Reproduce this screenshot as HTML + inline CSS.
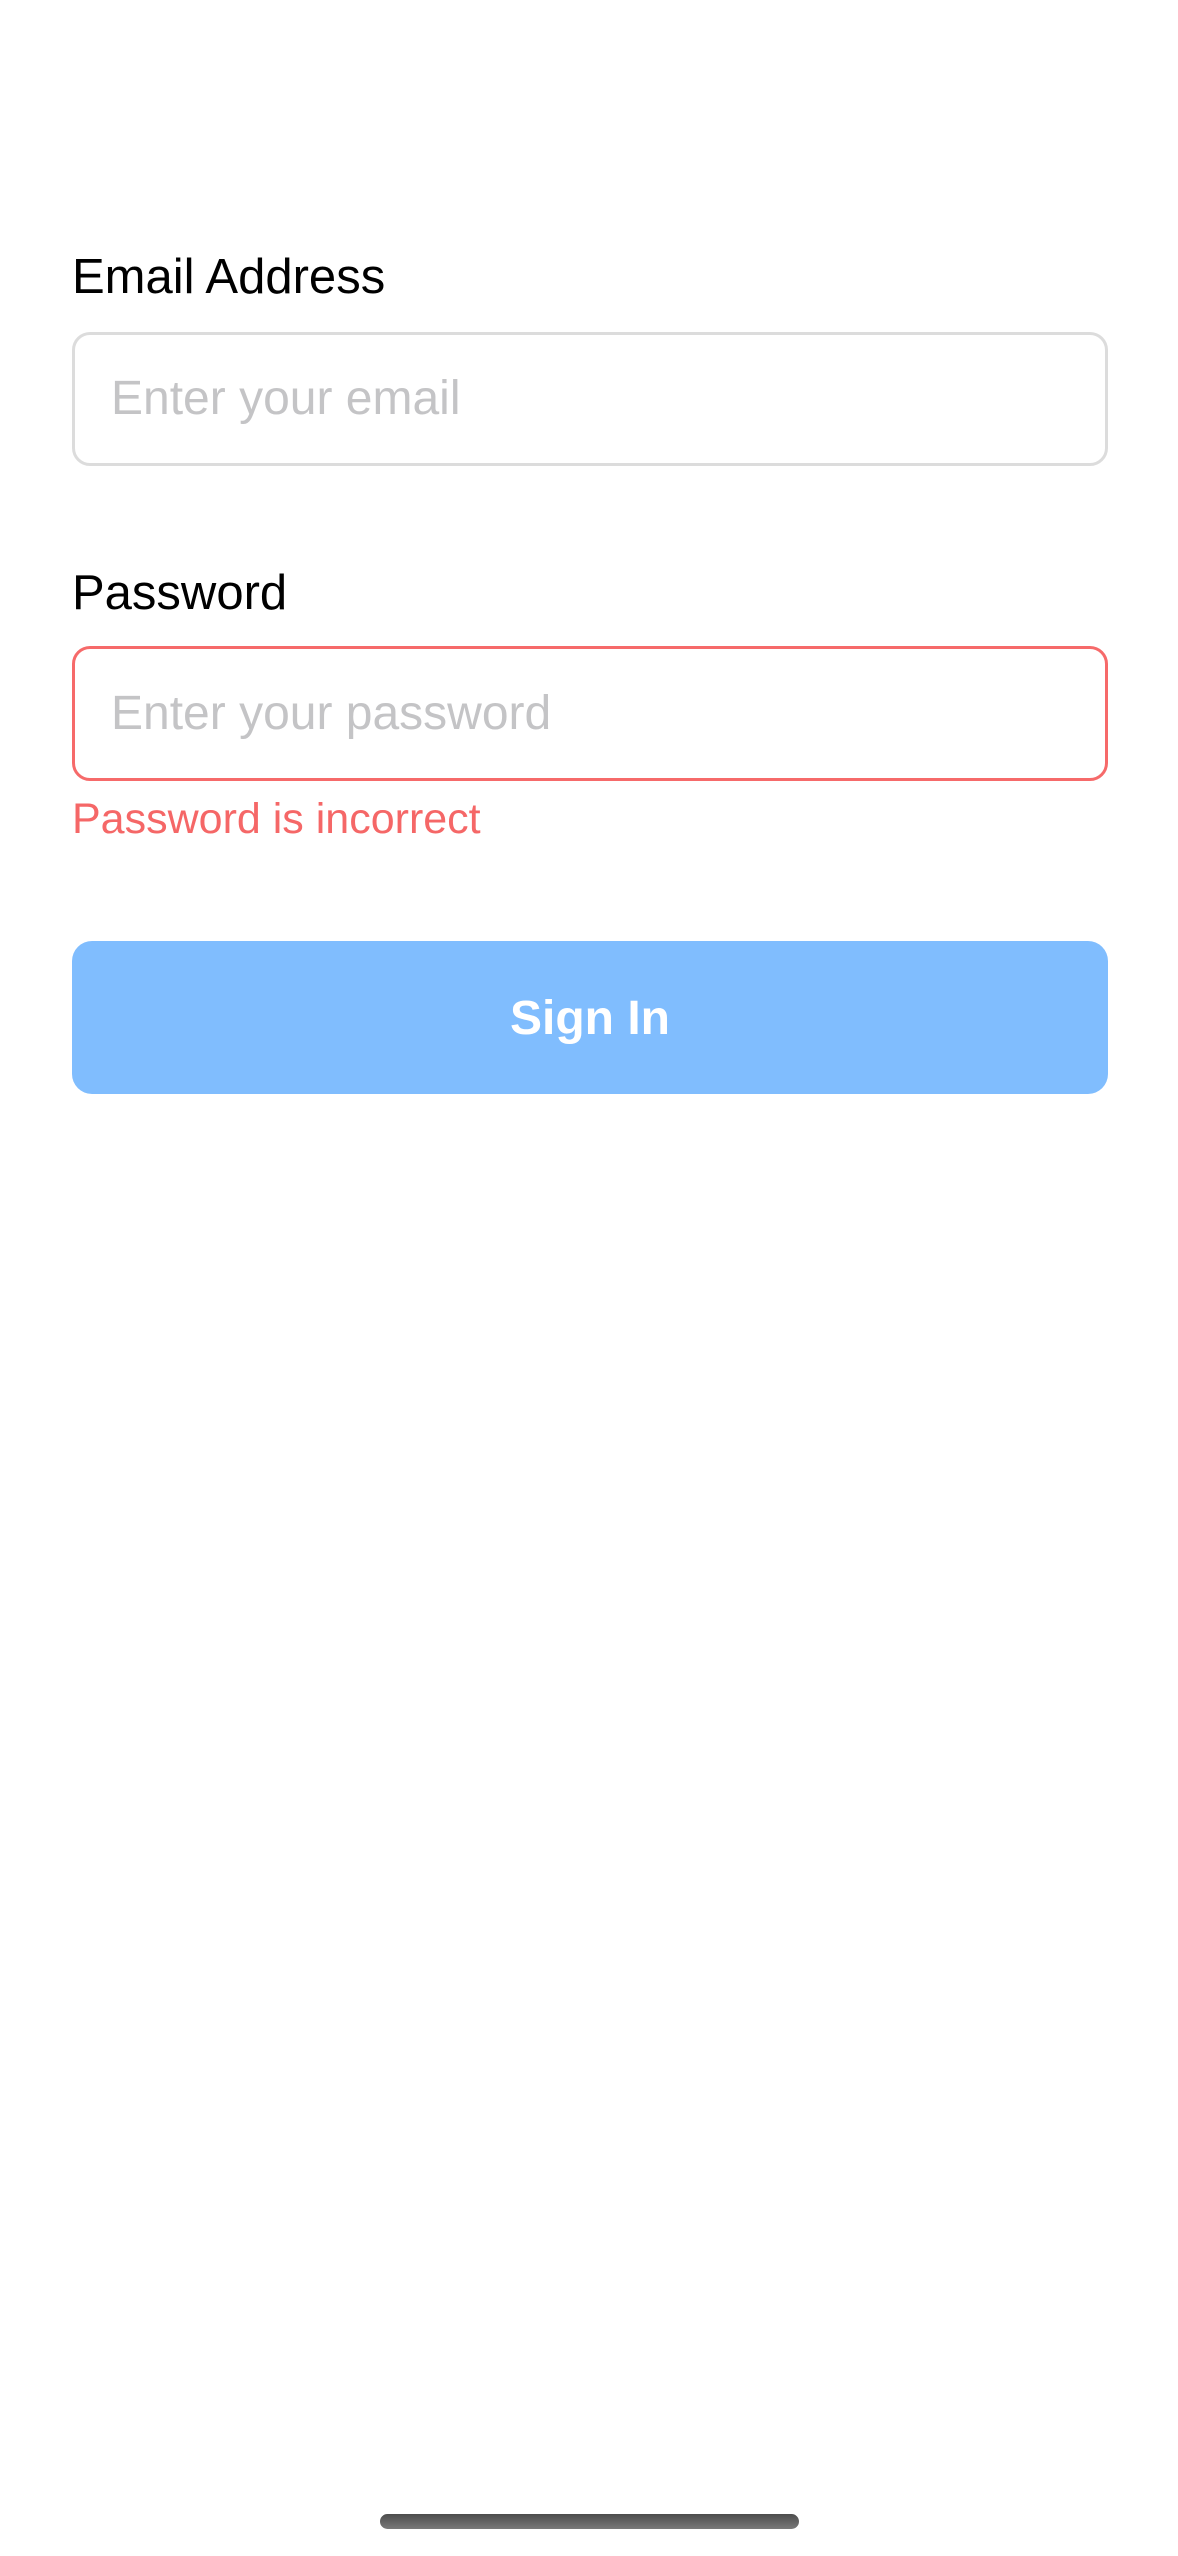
<!DOCTYPE html>
<html><head><meta charset="utf-8"><style>
html,body{margin:0;padding:0;background:#fff;}
body{width:1178px;height:2556px;position:relative;overflow:hidden;font-family:"Liberation Sans",sans-serif;}
.t{position:absolute;white-space:nowrap;line-height:1;}
.box{position:absolute;left:72px;width:1036px;box-sizing:border-box;border-radius:18px;}
</style></head><body>
<div class="t" style="left:72px;top:253px;font-size:49px;color:#000;">Email Address</div>
<div class="box" style="top:332px;height:134px;border:3px solid #dcdcdc;"></div>
<div class="t" style="left:111px;top:375px;font-size:48px;color:#c4c4c6;">Enter your email</div>

<div class="t" style="left:72px;top:569px;font-size:49px;color:#000;">Password</div>
<div class="box" style="top:646px;height:135px;border:3px solid #f66a6a;"></div>
<div class="t" style="left:111px;top:690px;font-size:48px;color:#c4c4c6;">Enter your password</div>
<div class="t" style="left:72px;top:798px;font-size:43px;color:#f56767;">Password is incorrect</div>

<div class="box" style="top:941px;height:153px;background:#80bdfe;border-radius:20px;"></div>
<div class="t" style="left:72px;width:1036px;text-align:center;top:995px;font-size:48px;font-weight:bold;color:#fff;">Sign In</div>

<div style="position:absolute;left:380px;top:2514px;width:419px;height:15px;border-radius:8px;background:linear-gradient(#4d4d4d,#7a7a7a);"></div>
</body></html>
